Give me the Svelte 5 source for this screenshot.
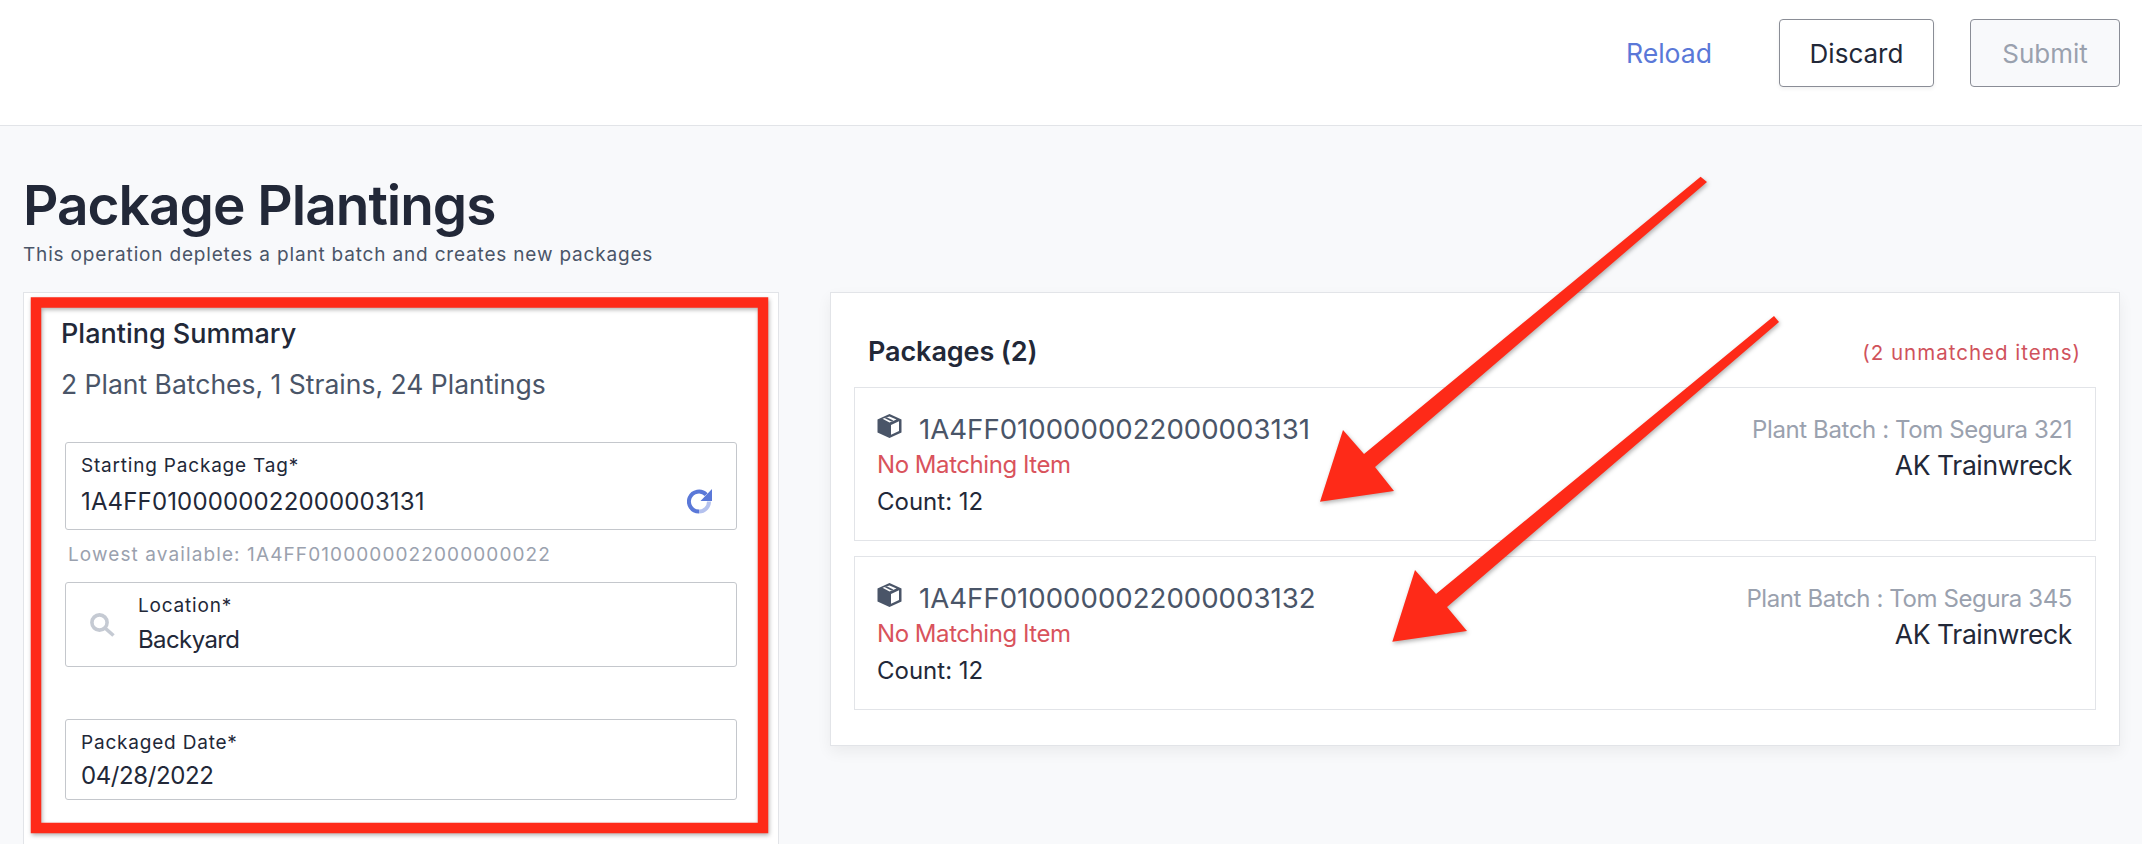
<script>
	const packages = [
		{ tag: '1A4FF0100000022000003131', batch: 'Tom Segura 321', strain: 'AK Trainwreck', count: 12 },
		{ tag: '1A4FF0100000022000003132', batch: 'Tom Segura 345', strain: 'AK Trainwreck', count: 12 },
	];
</script>

<div class="page">
	<header class="topbar">
		<button class="link">Reload</button>
		<button class="btn">Discard</button>
		<button class="btn disabled">Submit</button>
	</header>

	<main class="main">
		<h1>Package Plantings</h1>
		<p class="sub">This operation depletes a plant batch and creates new packages</p>

		<div class="columns">
			<section class="card left">
				<h2>Planting Summary</h2>
				<p class="summary">2 Plant Batches, 1 Strains, 24 Plantings</p>

				<div class="field tag">
					<div class="grow">
						<div class="label">Starting Package Tag*</div>
						<div class="value">1A4FF0100000022000003131</div>
					</div>
					<svg class="refresh" viewBox="0 0 25 25" width="25" height="25">
						<path d="M19.2 5.6A10 10 0 1 0 12 22.5" fill="none" stroke="#5a78d8" stroke-width="4" />
						<path d="M12 22.5A10 10 0 0 0 22 12.5" fill="none" stroke="#b4c1ee" stroke-width="4" />
						<polygon points="25,0 25,12 13.5,12" fill="#5a78d8" />
					</svg>
				</div>
				<div class="hint">Lowest available: 1A4FF0100000022000000022</div>

				<div class="field location">
					<svg class="search" viewBox="0 0 26 24" width="26" height="24">
						<circle cx="9.5" cy="9.5" r="7.6" fill="none" stroke="#c5cad3" stroke-width="3.6" />
						<line x1="15.5" y1="15.5" x2="23.5" y2="22.5" stroke="#c5cad3" stroke-width="3.6" />
					</svg>
					<div class="grow">
						<div class="label">Location*</div>
						<div class="value">Backyard</div>
					</div>
				</div>

				<div class="field date">
					<div class="label">Packaged Date*</div>
					<div class="value">04/28/2022</div>
				</div>
			</section>

			<section class="card right">
				<div class="card-head">
					<h3>Packages (2)</h3>
					<span class="unmatched">(2 unmatched items)</span>
				</div>

				<div class="list">
					{#each packages as p}
						<div class="pkg">
							<div>
								<div class="pkg-tag">
									<svg class="box" viewBox="0 0 25 24" width="25" height="24">
										<polygon points="12.5,0 24.5,5.5 24.5,18.5 12.5,24 0.5,18.5 0.5,5.5" fill="#4a5568" />
										<polygon points="14,11 22,7.2 22,17 14,20.8" fill="#fff" />
										<polygon points="5.5,4.8 12.5,2.4 19.5,5.6 12.5,8.6" fill="#fff" />
										<polygon points="7.5,3.9 9.6,3.2 16.4,6.6 14.3,7.6" fill="#4a5568" />
									</svg>
									<span>{p.tag}</span>
								</div>
								<div class="no-match">No Matching Item</div>
								<div class="count">Count: {p.count}</div>
							</div>
							<div class="pkg-right">
								<div class="batch">Plant Batch : {p.batch}</div>
								<div class="strain">{p.strain}</div>
							</div>
						</div>
					{/each}
				</div>
			</section>
		</div>
	</main>

	<!-- screenshot annotations drawn on top of the page -->
	<svg class="marks" viewBox="0 0 2142 844" width="2142" height="844">
		<rect x="36" y="302.5" width="727" height="525.5" fill="none" stroke="#fe2a18" stroke-width="10.5" />
		<polygon points="1700.6,176.7 1364,454 1343,430 1320,501.7 1394,491 1375,467 1707,182" fill="#fe2a18" />
		<polygon points="1774,316 1436,594 1415,570 1392.3,641.7 1467,631 1447,607 1779,322" fill="#fe2a18" />
	</svg>
</div>

<style>
	:global(body) {
		margin: 0;
		background: #f8f9fb;
		font-family: Inter, "Liberation Sans", sans-serif;
		color: #222838;
	}

	.page {
		position: relative;
		height: 844px;
		overflow: hidden;
	}

	.topbar {
		height: 106px;
		border-bottom: 1px solid #e2e4e8;
		background: #fff;
		display: flex;
		align-items: flex-start;
		justify-content: flex-end;
		padding: 19px 22px 0 0;
	}

	button {
		font: inherit;
		font-size: 26px;
		cursor: pointer;
	}

	.link {
		background: none;
		border: none;
		padding: 0;
		height: 68px;
		font-size: 26.6px;
		color: #5a78d8;
		margin-right: 67px;
	}

	.btn {
		width: 155px;
		height: 68px;
		box-sizing: border-box;
		background: #fff;
		border: 1px solid #8a8d96;
		border-radius: 4px;
		color: #222838;
		padding: 0;
		margin-right: 36px;
		box-shadow: 0 2px 4px rgba(0, 0, 0, 0.06);
	}

	.btn.disabled {
		width: 150px;
		margin-right: 0;
		background: #f8f9fb;
		color: #9aa1ae;
		box-shadow: none;
	}

	.main {
		padding: 49px 22px 0 23px;
	}

	h1 {
		margin: 0;
		font-size: 55px;
		line-height: 60px;
		font-weight: 600;
		letter-spacing: -1px;
	}

	.sub {
		margin: 8px 0 0;
		font-size: 19px;
		line-height: 24px;
		letter-spacing: 0.82px;
		color: #4a5568;
		height: 24px;
	}

	.columns {
		display: grid;
		grid-template-columns: 756px 1fr;
		gap: 51px;
		align-items: start;
		margin-top: 25px;
	}

	.card {
		background: #fff;
		border: 1px solid #e2e4e8;
		box-sizing: border-box;
	}

	.left {
		padding: 25px 41px 0 37px;
		height: 640px;
	}

	.right {
		padding: 40px 23px 35px 23px;
		box-shadow: 0 6px 14px rgba(0, 0, 0, 0.06);
	}

	h2 {
		margin: 0;
		font-size: 27px;
		line-height: 32px;
		font-weight: 500;
	}

	.summary {
		margin: 18px 0 0;
		font-size: 26.5px;
		line-height: 32px;
		color: #4a5568;
	}

	.field {
		margin-left: 4px;
		border: 1px solid #c4c7cc;
		border-radius: 3px;
		box-sizing: border-box;
		padding-left: 15px;
		padding-right: 15px;
	}

	.tag {
		margin-top: 42px;
		height: 88px;
		padding-top: 12px;
		display: flex;
		align-items: flex-start;
	}

	.location {
		margin-top: 16px;
		height: 85px;
		padding-top: 12px;
		padding-left: 24px;
		display: flex;
		align-items: flex-start;
		gap: 22px;
	}

	.date {
		margin-top: 52px;
		height: 81px;
		padding-top: 12px;
	}

	.grow {
		flex: 1;
	}

	.label {
		font-size: 19px;
		line-height: 22px;
		letter-spacing: 0.8px;
	}

	.value {
		font-size: 24px;
		line-height: 30px;
	}

	.tag .value {
		margin-top: 10px;
		letter-spacing: 0.15px;
	}

	.location .value {
		margin-top: 8px;
		letter-spacing: -0.6px;
	}

	.date .value {
		margin-top: 7px;
		letter-spacing: -0.4px;
	}

	.refresh {
		margin-top: 34px;
		margin-right: 9px;
	}

	.search {
		margin-top: 18px;
		flex-shrink: 0;
	}

	.hint {
		margin: 14px 0 0 7px;
		font-size: 19px;
		line-height: 22px;
		letter-spacing: 1.1px;
		color: #9aa1ae;
	}

	.card-head {
		display: flex;
		justify-content: space-between;
		align-items: center;
		box-sizing: border-box;
		padding: 6px 15px 0 14px;
		height: 32px;
	}

	h3 {
		margin: 0;
		font-size: 27px;
		line-height: 32px;
		font-weight: 600;
		letter-spacing: -0.1px;
	}

	.unmatched {
		font-size: 20.5px;
		letter-spacing: 1px;
		color: #d0525c;
	}

	.list {
		margin-top: 22px;
		display: flex;
		flex-direction: column;
		gap: 15px;
	}

	.pkg {
		height: 154px;
		box-sizing: border-box;
		border: 1px solid #e2e4e8;
		padding: 24px 23px 0 22px;
		display: flex;
		justify-content: space-between;
	}

	.pkg-tag {
		display: flex;
		align-items: center;
		gap: 17px;
		font-size: 27.6px;
		line-height: 34px;
		color: #4a5568;
	}

	.box {
		margin-top: -6px;
	}

	.no-match {
		margin-top: 4px;
		font-size: 24px;
		line-height: 30px;
		letter-spacing: -0.45px;
		color: #d9535c;
	}

	.count {
		margin-top: 7px;
		font-size: 24px;
		line-height: 30px;
	}

	.pkg-right {
		text-align: right;
		padding-top: 2px;
	}

	.batch {
		font-size: 24px;
		line-height: 32px;
		letter-spacing: -0.4px;
		color: #9aa1ae;
	}

	.strain {
		margin-top: 3px;
		font-size: 26.5px;
		line-height: 32px;
		letter-spacing: -0.4px;
	}

	.marks {
		position: absolute;
		top: 0;
		left: 0;
		pointer-events: none;
		filter: drop-shadow(1px 2px 2px rgba(0, 0, 0, 0.3));
	}
</style>
